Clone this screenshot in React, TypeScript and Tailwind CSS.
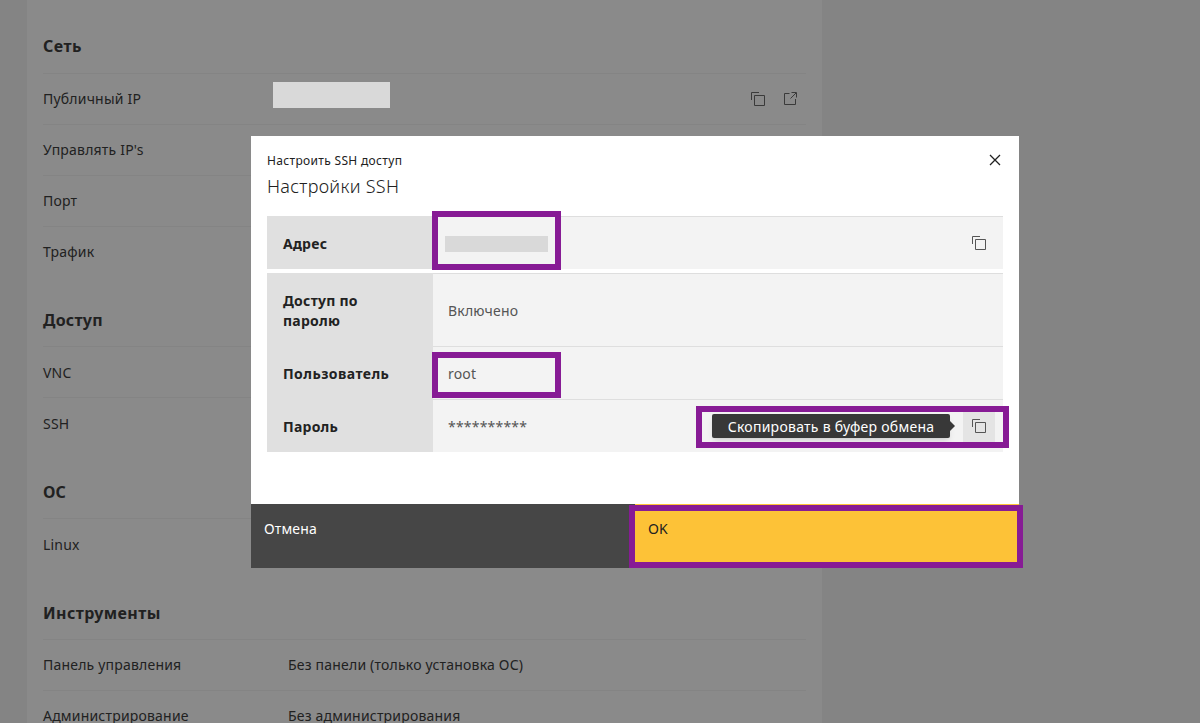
import React from 'react';

function CopyIcon({ className }: { className?: string }) {
  return (
    <svg width="16" height="16" viewBox="0 0 16 16" fill="none" stroke="currentColor" className={className}>
      <path d="M1.5 9V1.5H9M4.5 4.5h10v10h-10z" />
    </svg>
  );
}

function ExternalIcon() {
  return (
    <svg width="16" height="16" viewBox="0 0 16 16" fill="none" stroke="currentColor">
      <path d="M7.5 2.5h-5v11h11V8M9.5 1.5h5v5M14 2L8.5 7.5" />
    </svg>
  );
}

type Item = { label: string; value?: string; ip?: boolean };

function Section({ title, headClass, rowClass, items }: { title: string; headClass: string; rowClass?: string; items: Item[] }) {
  return (
    <section>
      <h2 className={`flex items-end text-base leading-6 font-bold ${headClass}`}>{title}</h2>
      {items.map((item) => (
        <div
          key={item.label}
          className={`flex h-[51px] items-center border-t border-[#848484] text-sm tracking-[0.2px] ${rowClass ?? ''}`}
        >
          <span className={item.ip ? 'w-[230px]' : 'w-[245px]'}>{item.label}</span>
          {item.value && <span>{item.value}</span>}
          {item.ip && (
            <>
              <span className="-mt-[9px] h-[26px] w-[117px] bg-[#d9d9d9]" />
              <span className="mr-2 ml-auto flex gap-4 text-[#3a3a3a]">
                <CopyIcon />
                <ExternalIcon />
              </span>
            </>
          )}
        </div>
      ))}
    </section>
  );
}

function Row({ label, labelClass, height, children }: { label: string; labelClass: string; height: string; children?: React.ReactNode }) {
  return (
    <div className={`flex text-sm ${height}`}>
      <div
        className={`flex w-[166px] shrink-0 items-center bg-[#e0e0e0] pt-[3px] pr-10 pl-4 leading-5 font-bold text-[#222] ${labelClass}`}
      >
        {label}
      </div>
      <div className="relative flex grow items-center border-t border-[#dedede] bg-[#f3f3f3] pt-0.5 pr-2 pl-[15px] tracking-[0.2px] text-[#555]">
        {children}
      </div>
    </div>
  );
}

export default function App() {
  return (
    <div className="relative h-[723px] w-[1200px] overflow-hidden bg-[#848484] font-['Noto_Sans','Open_Sans',sans-serif] text-[#212121]">
      <main className="ml-[27px] h-full w-[795px] bg-[#8a8a8a] px-4">
        <Section
          title="Сеть"
          headClass="h-[73px] pb-[15px] tracking-[0.5px]"
          items={[{ label: 'Публичный IP', ip: true }, { label: "Управлять IP's" }, { label: 'Порт' }, { label: 'Трафик' }]}
        />
        <Section
          title="Доступ"
          headClass="h-[69px] pb-[14px] tracking-[0.25px]"
          rowClass="pt-0.5"
          items={[{ label: 'VNC' }, { label: 'SSH' }]}
        />
        <Section title="ОС" headClass="h-[70px] pb-[14px]" rowClass="pt-0.5" items={[{ label: 'Linux' }]} />
        <Section
          title="Инструменты"
          headClass="h-[70px] pb-[14px] tracking-[0.4px]"
          items={[
            { label: 'Панель управления', value: 'Без панели (только установка ОС)' },
            { label: 'Администрирование', value: 'Без администрирования' },
          ]}
        />
      </main>

      <div role="dialog" className="absolute top-[136px] left-[251px] flex h-[432px] w-[768px] flex-col bg-white">
        <header className="flex h-20 justify-between px-4 pt-4">
          <div>
            <p className="text-xs leading-[18px] tracking-[0.33px]">Настроить SSH доступ</p>
            <h1 className="mt-0.5 text-lg leading-7 font-[350] tracking-[0.3px]">Настройки SSH</h1>
          </div>
          <svg width="16" height="16" viewBox="0 0 16 16" stroke="#212121" strokeWidth="1.3">
            <path d="M3 3l10 10M13 3L3 13" />
          </svg>
        </header>
        <div className="grow px-4">
          <div className="mb-1">
            <Row label="Адрес" labelClass="tracking-[0.25px]" height="h-[53px]">
              <span className="-ml-[3px] h-4 w-[103px] bg-[#d9d9d9]" />
              <CopyIcon className="mr-2 mb-0.5 ml-auto" />
              <span className="absolute -top-1.5 -left-px h-[59px] w-[129px] border-6 border-[#871b95]" />
            </Row>
          </div>
          <Row label="Доступ по паролю" labelClass="tracking-[0.25px]" height="h-[73px]">
            Включено
          </Row>
          <Row label="Пользователь" labelClass="tracking-[0.45px]" height="h-[53px]">
            root
            <span className="absolute top-[5px] -left-px h-[46px] w-[129px] border-6 border-[#871b95]" />
          </Row>
          <Row label="Пароль" labelClass="tracking-[0.25px]" height="h-[53px]">
            **********
            <span className="ml-auto flex h-8 w-8 items-center justify-center bg-[#e4e4e4] pb-0.5">
              <CopyIcon />
            </span>
            <div className="absolute top-[14px] left-[279px] h-6 w-[238px] rounded-xs bg-[#383838] text-center leading-[25px] tracking-[0.27px] text-white shadow-md">
              Скопировать в буфер обмена
              <svg width="5" height="10" viewBox="0 0 5 10" className="absolute top-[7px] -right-[5px]">
                <path d="M0 0l5 5-5 5z" fill="#383838" />
              </svg>
            </div>
            <span className="absolute top-[6px] left-[263px] h-[42px] w-[313px] border-6 border-[#871b95]" />
          </Row>
        </div>
        <footer className="relative flex h-16 text-sm tracking-[0.15px]">
          <button className="flex w-1/2 items-start bg-[#464646] px-[13px] pt-[15px] text-white">Отмена</button>
          <button className="flex w-1/2 items-start bg-[#fdc237] px-[13px] pt-[15px] text-[#212121]">OK</button>
          <span className="absolute top-px left-[378px] h-[63px] w-[394px] border-6 border-[#871b95]" />
        </footer>
      </div>
    </div>
  );
}
